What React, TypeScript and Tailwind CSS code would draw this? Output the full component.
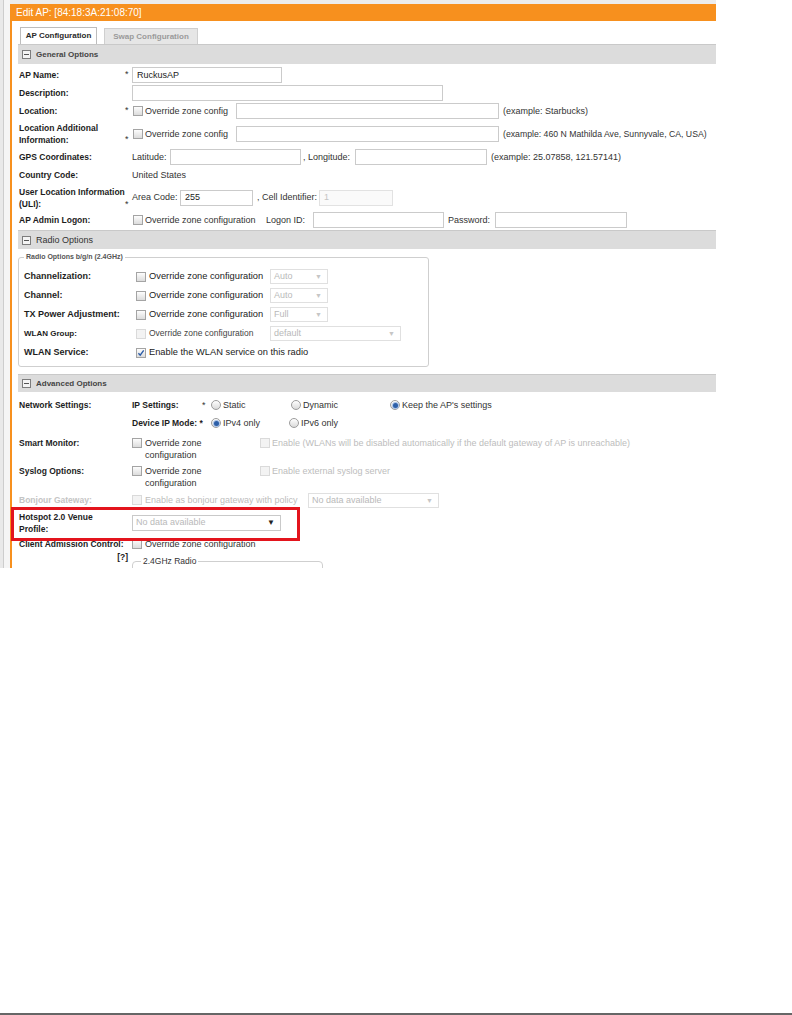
import React from "react";

const Cb = ({ checked = false, disabled = false }: { checked?: boolean; disabled?: boolean }) => (
  <span
    className={
      disabled
        ? "flex h-[10px] w-[10px] shrink-0 items-center justify-center border border-[#dadada] bg-[#f3f3f3]"
        : "flex h-[10px] w-[10px] shrink-0 items-center justify-center border border-[#a4a4a4] bg-gradient-to-b from-[#fdfdfd] to-[#dcdcdc]"
    }
  >
    {checked && (
      <svg width="8" height="8" viewBox="0 0 8 8">
        <path d="M1.4 4.3 L3.2 6.2 L6.7 1.4" fill="none" stroke="#2b5ca8" strokeWidth="1.4" />
      </svg>
    )}
  </span>
);

const Rd = ({ checked = false }: { checked?: boolean }) => (
  <span className="flex h-[10px] w-[10px] shrink-0 items-center justify-center rounded-full border border-[#9c9c9c] bg-gradient-to-b from-[#ffffff] to-[#dadada]">
    {checked && <span className="h-[5px] w-[5px] rounded-full bg-[#2d5fa8] ring-1 ring-[#a9c2e6]" />}
  </span>
);

const Box = ({ cls, value, muted = false }: { cls: string; value?: string; muted?: boolean }) => (
  <div
    className={
      cls +
      (muted
        ? " flex h-[16px] shrink-0 items-center border border-[#e2e2e2] bg-[#fafafa] pl-[4px] text-[9px] text-[#c4c4c4]"
        : " flex h-[16px] shrink-0 items-center border border-[#cbcbcb] bg-white pl-[4px] text-[9px] text-[#222]")
    }
  >
    {value}
  </div>
);

const Sel = ({ cls, value, dark = false }: { cls: string; value: string; dark?: boolean }) => (
  <div
    className={
      cls +
      (dark
        ? " flex h-[16px] shrink-0 items-center justify-between border border-[#c9c9c9] bg-white pl-[3px] pr-[5px] text-[9px]"
        : " flex h-[15px] shrink-0 items-center justify-between border border-[#e0e0e0] bg-white pl-[3px] pr-[5px] text-[9px]")
    }
  >
    <span className="text-[#b9b9b9]">{value}</span>
    <span className={dark ? "text-[8px] text-[#222]" : "text-[7px] text-[#c6c6c6]"}>▼</span>
  </div>
);

const Bar = ({ title, cls, tcls }: { title: string; cls: string; tcls: string }) => (
  <div className={cls + " flex items-center border-t border-[#c9c9c9] bg-[#dcdcdc]"}>
    <span className="ml-[4px] mr-[5px] flex h-[9px] w-[9px] items-center justify-center border border-[#7d7d7d] bg-[#f4f4f4]">
      <span className="h-px w-[5px] bg-[#555]" />
    </span>
    <span className={tcls}>{title}</span>
  </div>
);

const L = "text-[8.5px] font-bold text-[#1d1d1d] whitespace-nowrap";
const T = "text-[9px] text-[#333] whitespace-nowrap";
const G = "text-[9px] text-[#bdbdbd] whitespace-nowrap";

export default function App() {
  return (
    <div className="flex h-[1015px] w-[792px] flex-col bg-white font-['Liberation_Sans',Arial,sans-serif] leading-none">
      <div className="flex h-[568px] w-[716px] shrink-0 overflow-hidden">
        <div className="w-[3px] bg-[#e9e9e9]" />
        <div className="w-[1px] bg-[#cdcdcd]" />
        <div className="w-[6px] bg-[#f5f5f5]" />
        <div className="relative flex-1">
          <div className="h-[4px] bg-[#ececec]" />
          <div className="flex h-[17px] items-center bg-[#f7901e] pl-[6px] text-[10px] text-white">
            Edit AP: [84:18:3A:21:08:70]
          </div>
          <div className="h-[547px] overflow-hidden border-l-2 border-[#f7901e] bg-white pl-[6px]">
            {/* tabs */}
            <div className="flex items-end pl-[2px] pt-[6px]">
              <div className="flex h-[17px] w-[77px] items-center justify-center border border-b-0 border-[#bdbdbd] bg-white text-[8px] font-bold text-[#2a2a2a]">
                AP Configuration
              </div>
              <div className="ml-[7px] flex h-[16px] w-[94px] items-center justify-center border border-b-0 border-[#cfcfcf] bg-[#e6e6e6] text-[8px] font-bold text-[#9a9a9a]">
                Swap Configuration
              </div>
            </div>
            <Bar title="General Options" cls="h-[20px]" tcls="text-[8px] font-bold text-[#444]" />

            <div className="pl-[1px] pt-[2px]">
              <div className="flex h-[18px] items-center">
                <span className={L + " w-[106px]"}>AP Name:</span>
                <span className="w-[7px] self-start pt-[4px] text-[9px] text-[#333]">*</span>
                <Box cls="w-[150px]" value="RuckusAP" />
              </div>
              <div className="flex h-[18px] items-center">
                <span className={L + " w-[106px]"}>Description:</span>
                <span className="w-[7px]" />
                <Box cls="w-[311px]" />
              </div>
              <div className="flex h-[18px] items-center">
                <span className={L + " w-[106px]"}>Location:</span>
                <span className="w-[7px] self-start pt-[4px] text-[9px] text-[#333]">*</span>
                <span className="ml-[1px]"><Cb /></span>
                <span className={T + " ml-[2px] w-[91px]"}>Override zone config</span>
                <Box cls="w-[263px]" />
                <span className={T + " ml-[4px]"}>(example: Starbucks)</span>
              </div>
              <div className="flex h-[28px] items-center">
                <span className={L + " w-[106px] leading-[12px]"}>
                  Location Additional
                  <br />
                  Information:
                </span>
                <span className="w-[7px] self-end pb-[4px] text-[9px] text-[#333]">*</span>
                <span className="ml-[1px]"><Cb /></span>
                <span className={T + " ml-[2px] w-[91px]"}>Override zone config</span>
                <Box cls="w-[263px]" />
                <span className="ml-[4px] whitespace-nowrap text-[8.7px] text-[#333]">(example: 460 N Mathilda Ave, Sunnyvale, CA, USA)</span>
              </div>
              <div className="flex h-[18px] items-center">
                <span className={L + " w-[106px]"}>GPS Coordinates:</span>
                <span className="w-[7px]" />
                <span className={T + " w-[38px]"}>Latitude:</span>
                <Box cls="w-[131px]" />
                <span className={T + " ml-[2px] w-[52px]"}>, Longitude:</span>
                <Box cls="w-[132px]" />
                <span className={T + " ml-[4px]"}>(example: 25.07858, 121.57141)</span>
              </div>
              <div className="flex h-[18px] items-center">
                <span className={L + " w-[106px]"}>Country Code:</span>
                <span className="w-[7px]" />
                <span className={T}>United States</span>
              </div>
              <div className="flex h-[27px] items-center">
                <span className={L + " w-[106px] leading-[12px]"}>
                  User Location Information
                  <br />
                  (ULI):
                </span>
                <span className="w-[7px] self-end pb-[2px] text-[9px] text-[#333]">*</span>
                <span className={T + " w-[48px]"}>Area Code:</span>
                <Box cls="w-[73px]" value="255" />
                <span className={T + " ml-[4px] w-[62px]"}>, Cell Identifier:</span>
                <Box cls="w-[74px]" value="1" muted />
              </div>
              <div className="flex h-[18px] items-center">
                <span className={L + " w-[106px]"}>AP Admin Logon:</span>
                <span className="w-[7px]" />
                <span className="ml-[1px]"><Cb /></span>
                <span className={T + " ml-[2px] w-[121px]"}>Override zone configuration</span>
                <span className={T + " w-[47px]"}>Logon ID:</span>
                <Box cls="w-[131px]" />
                <span className={T + " ml-[4px] w-[47px]"}>Password:</span>
                <Box cls="w-[132px]" />
              </div>
            </div>

            <Bar title="Radio Options" cls="mt-[1px] h-[19px]" tcls="text-[9px] text-[#333]" />

            <fieldset className="mt-[3px] w-[411px] rounded-[3px] border border-[#cfcfcf] px-[5px] pb-[4px] pt-[5px]">
              <legend className="px-[2px] text-[7px] font-bold leading-[10px] text-[#555]">
                Radio Options b/g/n (2.4GHz)
              </legend>
              {[
                ["Channelization:", "Auto", "w-[58px]"],
                ["Channel:", "Auto", "w-[58px]"],
                ["TX Power Adjustment:", "Full", "w-[58px]"],
                ["WLAN Group:", "default", "w-[131px]"],
              ].map(([lab, v, w], i) => (
                <div key={lab} className="flex h-[19px] items-center">
                  <span className={(i === 3 ? "text-[8px]" : "text-[9px]") + " w-[112px] font-bold text-[#1d1d1d] whitespace-nowrap"}>
                    {lab}
                  </span>
                  <Cb disabled={i === 3} />
                  <span className={(i === 3 ? "text-[8.5px] text-[#444]" : "text-[9.3px] text-[#222]") + " ml-[3px] w-[121px] whitespace-nowrap"}>
                    Override zone configuration
                  </span>
                  <Sel cls={w} value={v} />
                </div>
              ))}
              <div className="flex h-[19px] items-center">
                <span className="w-[112px] text-[9px] font-bold text-[#1d1d1d]">WLAN Service:</span>
                <Cb checked />
                <span className="ml-[3px] whitespace-nowrap text-[9.3px] text-[#222]">Enable the WLAN service on this radio</span>
              </div>
            </fieldset>

            <Bar title="Advanced Options" cls="mt-[7px] h-[18px]" tcls="text-[8px] font-bold text-[#444]" />

            <div className="pl-[1px] pt-[4px]">
              <div className="flex h-[18px] items-center">
                <span className={L + " w-[113px]"}>Network Settings:</span>
                <span className={L + " w-[70px]"}>IP Settings:</span>
                <span className="w-[9px] text-[9px] text-[#333]">*</span>
                <span className="flex w-[80px] items-center gap-[2px]">
                  <Rd />
                  <span className={T + " text-[#222]"}>Static</span>
                </span>
                <span className="flex w-[99px] items-center gap-[2px]">
                  <Rd />
                  <span className={T + " text-[#222]"}>Dynamic</span>
                </span>
                <span className="flex items-center gap-[2px]">
                  <Rd checked />
                  <span className={T + " text-[#222]"}>Keep the AP&apos;s settings</span>
                </span>
              </div>
              <div className="flex h-[18px] items-center">
                <span className="w-[113px]" />
                <span className={L + " w-[79px]"}>Device IP Mode: *</span>
                <span className="flex w-[78px] items-center gap-[2px]">
                  <Rd checked />
                  <span className={T + " text-[#222]"}>IPv4 only</span>
                </span>
                <span className="flex items-center gap-[2px]">
                  <Rd />
                  <span className={T + " text-[#222]"}>IPv6 only</span>
                </span>
              </div>
              <div className="mt-[3px] flex h-[28px] items-start pt-[2px]">
                <span className={L + " w-[113px] leading-[12px]"}>Smart Monitor:</span>
                <span className="pt-[1px]"><Cb /></span>
                <span className={T + " ml-[3px] w-[115px] leading-[12px] text-[#222]"}>
                  Override zone
                  <br />
                  configuration
                </span>
                <span className="pt-[1px]"><Cb disabled /></span>
                <span className={G + " ml-[2px] leading-[12px]"}>
                  Enable (WLANs will be disabled automatically if the default gateway of AP is unreachable)
                </span>
              </div>
              <div className="flex h-[28px] items-start pt-[2px]">
                <span className={L + " w-[113px] leading-[12px]"}>Syslog Options:</span>
                <span className="pt-[1px]"><Cb /></span>
                <span className={T + " ml-[3px] w-[115px] leading-[12px] text-[#222]"}>
                  Override zone
                  <br />
                  configuration
                </span>
                <span className="pt-[1px]"><Cb disabled /></span>
                <span className={G + " ml-[2px] leading-[12px]"}>Enable external syslog server</span>
              </div>
              <div className="flex h-[18px] items-center">
                <span className="w-[113px] whitespace-nowrap text-[8.5px] font-bold text-[#c4c4c4]">Bonjour Gateway:</span>
                <Cb disabled />
                <span className={G + " ml-[3px] w-[163px]"}>Enable as bonjour gateway with policy</span>
                <Sel cls="w-[131px]" value="No data available" />
              </div>
              <div className="flex h-[27px] items-center">
                <span className={L + " w-[113px] leading-[12px]"}>
                  Hotspot 2.0 Venue
                  <br />
                  Profile:
                </span>
                <Sel cls="w-[149px]" value="No data available" dark />
              </div>
              <div className="flex h-[16px] items-center">
                <span className={L + " w-[113px]"}>Client Admission Control:</span>
                <Cb />
                <span className={T + " ml-[3px] text-[#222]"}>Override zone configuration</span>
              </div>
              <div className="flex items-start">
                <span className="w-[113px] pr-[4px] text-right text-[8.5px] font-bold leading-[10px] text-[#1d1d1d]">[?]</span>
                <fieldset className="mt-[4px] h-[40px] w-[191px] rounded-[4px] border border-[#cfcfcf] px-[5px]">
                  <legend className="ml-[3px] px-[2px] text-[8.5px] leading-[10px] text-[#333]">2.4GHz Radio</legend>
                </fieldset>
              </div>
            </div>
          </div>

          <div className="absolute left-[1px] top-[507px] h-[34px] w-[289px] border-[3px] border-[#e3141d]" />
        </div>
      </div>
      <div className="flex-1" />
      <div className="h-[2px] shrink-0 bg-[#666]" />
    </div>
  );
}
